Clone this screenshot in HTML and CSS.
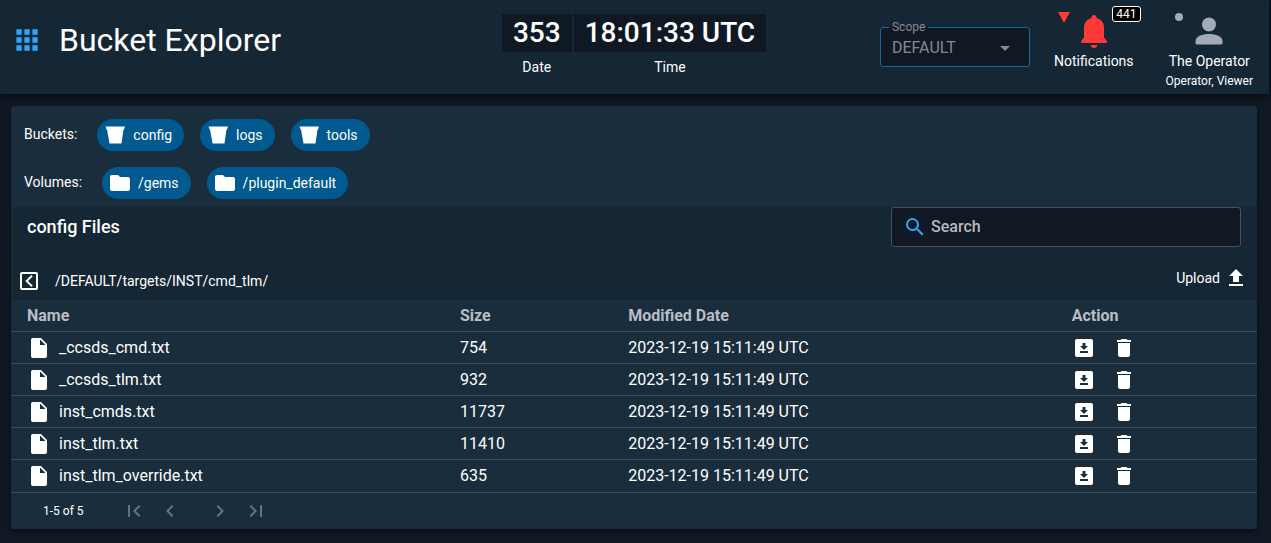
FILE: index.html
```html
<!DOCTYPE html>
<html lang="en">
<head>
<meta charset="utf-8">
<title>Bucket Explorer</title>
<link rel="stylesheet" href="styles.css">
</head>
<body>
<svg class="sprite" aria-hidden="true">
  <symbol id="bucket" viewBox="0 0 24 24"><path d="M2.500 3.500H22L21 6.500H20.500L18.500 20.500H6.500L4 6.500H3.500Z"/></symbol>
  <symbol id="folder" viewBox="0 0 24 24"><path d="M10,4H4C2.890,4 2,4.890 2,6V18A2,2 0 0,0 4,20H20A2,2 0 0,0 22,18V8C22,6.890 21.100,6 20,6H12L10,4Z"/></symbol>
  <symbol id="file" viewBox="0 0 24 24"><path d="M13,9V3.500L18.500,9M6,2C4.890,2 4,2.890 4,4V20A2,2 0 0,0 6,22H18A2,2 0 0,0 20,20V8L14,2H6Z"/></symbol>
  <symbol id="download" viewBox="0 0 24 24"><path d="M5,3H19A2,2 0 0,1 21,5V19A2,2 0 0,1 19,21H5A2,2 0 0,1 3,19V5A2,2 0 0,1 5,3M8,17H16V15H8V17M16,10H13.500V7H10.500V10H8L12,14L16,10Z"/></symbol>
  <symbol id="delete" viewBox="0 0 24 24"><path d="M19,4H15.500L14.500,3H9.500L8.500,4H5V6H19M6,19A2,2 0 0,0 8,21H16A2,2 0 0,0 18,19V7H6V19Z"/></symbol>
</svg>

<header class="app-bar">
  <div class="brand">
    <button class="icon-button apps" aria-label="Menu"><svg class="icon-large" viewBox="0 0 24 24"><path d="M16,20H20V16H16M16,14H20V10H16M10,8H14V4H10M16,8H20V4H16M10,14H14V10H10M4,14H8V10H4M4,20H8V16H4M10,20H14V16H10M4,8H8V4H4V8Z"/></svg></button>
    <h1 class="app-title">Bucket Explorer</h1>
  </div>
  <div class="clock">
    <div class="clock-part"><div class="clock-value">353</div><div class="clock-label">Date</div></div>
    <div class="clock-part"><div class="clock-value">18:01:33 UTC</div><div class="clock-label">Time</div></div>
  </div>
  <div class="tools">
    <fieldset class="scope">
      <legend class="scope-legend"><label for="scope">Scope</label></legend>
      <div class="scope-field">
        <select class="scope-select" id="scope"><option>DEFAULT</option></select>
        <svg class="scope-arrow" viewBox="0 0 24 24"><path d="M7,10L12,15L17,10H7Z"/></svg>
      </div>
    </fieldset>
    <button class="status notifications">
      <svg class="status-mark critical" viewBox="0 0 12 12"><path d="M0 1H12L6 12Z"/></svg>
      <svg class="bell" viewBox="0 0 26 33"><path d="M13 0C14.500 0 15.500 1 15.700 3C20.500 4.500 23 8 23 13V22C23 23.500 26 25 26 27Q26 28 25 28H1Q0 28 0 27C0 25 3 23.500 3 22V13C3 8 5.500 4.500 10.300 3C10.500 1 11.500 0 13 0ZM9.500 30H16.500C16 32 14.700 33 13 33S10 32 9.500 30Z"/></svg>
      <span class="badge">441</span>
      <span class="status-label">Notifications</span>
    </button>
    <button class="status user">
      <svg class="status-mark off" viewBox="0 0 12 12"><circle cx="5" cy="6" r="4"/></svg>
      <svg class="person" viewBox="0 0 28 28"><circle cx="14" cy="7.500" r="7"/><path d="M14 17C21 17 27.500 19.500 27.500 24V26Q27.500 27.500 26 27.500H2Q.5 27.500 .5 26V24C.5 19.500 7 17 14 17Z"/></svg>
      <span class="status-label">The Operator</span>
      <span class="status-sub">Operator, Viewer</span>
    </button>
  </div>
</header>

<main class="card">
  <section class="sources">
    <div class="source-row"><span class="source-label">Buckets:</span>
      <div class="chips">
        <button class="chip"><svg class="icon"><use href="#bucket"/></svg>config</button>
        <button class="chip"><svg class="icon"><use href="#bucket"/></svg>logs</button>
        <button class="chip"><svg class="icon"><use href="#bucket"/></svg>tools</button>
      </div>
    </div>
    <div class="source-row"><span class="source-label">Volumes:</span>
      <div class="chips">
        <button class="chip"><svg class="icon"><use href="#folder"/></svg>/gems</button>
        <button class="chip"><svg class="icon"><use href="#folder"/></svg>/plugin_default</button>
      </div>
    </div>
  </section>

  <section class="toolbar">
    <div class="toolbar-top">
      <h2 class="files-title">config Files</h2>
      <div class="search">
        <svg class="icon search-icon" viewBox="0 0 24 24"><path d="M9.500,3A6.500,6.500 0 0,1 16,9.500C16,11.110 15.410,12.590 14.440,13.730L14.710,14H15.500L20.500,19L19,20.500L14,15.500V14.710L13.730,14.440C12.590,15.410 11.110,16 9.500,16A6.500,6.500 0 0,1 3,9.500A6.500,6.500 0 0,1 9.500,3M9.500,5C7,5 5,7 5,9.500C5,12 7,14 9.500,14C12,14 14,12 14,9.500C14,7 12,5 9.500,5Z"/></svg>
        <input class="search-input" type="text" placeholder="Search" aria-label="Search">
      </div>
    </div>
    <div class="path-row">
      <div class="path">
        <button class="icon-button" aria-label="Back"><svg class="icon" viewBox="0 0 24 24"><path d="M19,3A2,2 0 0,1 21,5V19A2,2 0 0,1 19,21H5A2,2 0 0,1 3,19V5A2,2 0 0,1 5,3H19M19,19V5H5V19H19M15.710,7.410L11.120,12L15.710,16.590L14.290,18L8.290,12L14.290,6L15.710,7.410Z"/></svg></button>
        <span>/DEFAULT/targets/INST/cmd_tlm/</span>
      </div>
      <button class="icon-button upload">Upload<svg class="icon" viewBox="0 0 24 24"><path d="M9,16V10H5L12,3L19,10H15V16H9M5,20V18H19V20H5Z"/></svg></button>
    </div>
  </section>

  <table class="files">
    <thead><tr><th class="col-name">Name</th><th class="col-size">Size</th><th class="col-date">Modified Date</th><th>Action</th></tr></thead>
    <tbody>
      <tr><td><div class="file-name"><svg class="icon"><use href="#file"/></svg><span>_ccsds_cmd.txt</span></div></td><td>754</td><td>2023-12-19 15:11:49 UTC</td><td><div class="actions"><button class="icon-button" aria-label="Download"><svg class="icon"><use href="#download"/></svg></button><button class="icon-button" aria-label="Delete"><svg class="icon"><use href="#delete"/></svg></button></div></td></tr>
      <tr><td><div class="file-name"><svg class="icon"><use href="#file"/></svg><span>_ccsds_tlm.txt</span></div></td><td>932</td><td>2023-12-19 15:11:49 UTC</td><td><div class="actions"><button class="icon-button" aria-label="Download"><svg class="icon"><use href="#download"/></svg></button><button class="icon-button" aria-label="Delete"><svg class="icon"><use href="#delete"/></svg></button></div></td></tr>
      <tr><td><div class="file-name"><svg class="icon"><use href="#file"/></svg><span>inst_cmds.txt</span></div></td><td>11737</td><td>2023-12-19 15:11:49 UTC</td><td><div class="actions"><button class="icon-button" aria-label="Download"><svg class="icon"><use href="#download"/></svg></button><button class="icon-button" aria-label="Delete"><svg class="icon"><use href="#delete"/></svg></button></div></td></tr>
      <tr><td><div class="file-name"><svg class="icon"><use href="#file"/></svg><span>inst_tlm.txt</span></div></td><td>11410</td><td>2023-12-19 15:11:49 UTC</td><td><div class="actions"><button class="icon-button" aria-label="Download"><svg class="icon"><use href="#download"/></svg></button><button class="icon-button" aria-label="Delete"><svg class="icon"><use href="#delete"/></svg></button></div></td></tr>
      <tr><td><div class="file-name"><svg class="icon"><use href="#file"/></svg><span>inst_tlm_override.txt</span></div></td><td>635</td><td>2023-12-19 15:11:49 UTC</td><td><div class="actions"><button class="icon-button" aria-label="Download"><svg class="icon"><use href="#download"/></svg></button><button class="icon-button" aria-label="Delete"><svg class="icon"><use href="#delete"/></svg></button></div></td></tr>
    </tbody>
  </table>

  <footer class="pager">
    <span class="pager-count">1-5 of 5</span>
    <div class="pager-group">
      <button class="icon-button" disabled aria-label="First page"><svg class="icon" viewBox="0 0 24 24"><path d="M18.410,16.590L13.820,12L18.410,7.410L17,6L11,12L17,18L18.410,16.590M6,6H8V18H6V6Z"/></svg></button>
      <button class="icon-button" disabled aria-label="Previous page"><svg class="icon" viewBox="0 0 24 24"><path d="M15.410,16.580L10.830,12L15.410,7.410L14,6L8,12L14,18L15.410,16.580Z"/></svg></button>
    </div>
    <div class="pager-group">
      <button class="icon-button" disabled aria-label="Next page"><svg class="icon" viewBox="0 0 24 24"><path d="M8.590,16.580L13.170,12L8.590,7.410L10,6L16,12L10,18L8.590,16.580Z"/></svg></button>
      <button class="icon-button" disabled aria-label="Last page"><svg class="icon" viewBox="0 0 24 24"><path d="M5.590,7.410L10.180,12L5.590,16.590L7,18L13,12L7,6L5.590,7.410M16,6H18V18H16V6Z"/></svg></button>
    </div>
  </footer>
</main>
</body>
</html>
```
FILE: styles.css
```css
* { box-sizing: border-box; }
body {
  margin: 0;
  background: #101923;
  color: #fff;
  font: 14px/20px Roboto, sans-serif;
}
button, input, select { font: inherit; color: inherit; margin: 0; }
h1, h2 { margin: 0; }
svg { display: block; fill: currentColor; flex: none; }
.sprite { position: absolute; width: 0; height: 0; }
.icon { width: 24px; height: 24px; }
.icon-large { width: 32px; height: 32px; }
.icon-button {
  display: flex;
  align-items: center;
  padding: 0;
  border: 0;
  background: none;
}

.app-bar {
  display: grid;
  grid-template-columns: 1fr auto 1fr;
  margin-right: 2px;
  padding: 14px 12px 3px 11px;
  background: #152635;
  box-shadow: 0 2px 6px #060b12;
}
.brand { display: flex; align-items: center; gap: 16px; height: 52px; }
.apps { color: #2fa5f8; }
.app-title { font-size: 32px; line-height: 40px; font-weight: 400; }
.clock { display: flex; gap: 2px; text-align: center; }
.clock-value {
  padding: 0 11px;
  background: #101923;
  font-size: 28px;
  line-height: 38px;
  font-weight: 500;
}
.clock-label { margin-top: 5px; }
.tools { display: flex; justify-content: flex-end; align-items: flex-start; padding-right: 4px; }

.scope {
  width: 150px;
  min-width: 0;
  margin: 6px 24px 0 0;
  padding: 0;
  border: 1px solid #1d659c;
  border-radius: 3px;
  background: #101923;
  color: #858b92;
}
.scope-legend { margin-left: 8px; padding: 0 3px; font-size: 12px; line-height: 14px; }
.scope-field { display: grid; align-items: center; height: 32px; }
.scope-select {
  grid-area: 1 / 1;
  height: 28px;
  margin-bottom: 6px;
  padding: 0 32px 0 11px;
  border: 0;
  background: transparent;
  appearance: none;
  font-size: 16px;
}
.scope-arrow { grid-area: 1 / 1; justify-self: end; width: 24px; height: 24px; margin: 0 12px 6px 0; pointer-events: none; }

.status {
  position: relative;
  display: flex;
  flex-direction: column;
  align-items: center;
  padding: 0;
  border: 0;
  background: none;
}
.notifications { margin-right: 32px; }
.bell { width: 26px; height: 33px; margin-top: 1px; color: #ff3838; }
.person { width: 28px; height: 28px; margin: 3px 0; color: #a4abb6; }
.status-label { margin-top: 3px; line-height: 20px; }
.status-sub { font-size: 12px; line-height: 20px; }
.status-mark { position: absolute; top: -3px; width: 12px; height: 12px; }
.critical { left: 4px; color: #ff3838; }
.off { left: 8px; color: #a4abb6; }
.badge {
  position: absolute;
  top: -8px;
  right: -7px;
  padding: 0 3px;
  border: 1px solid #fff;
  border-radius: 3px;
  background: #000;
  font-size: 12px;
  line-height: 14px;
}

.card {
  margin: 12px 14px 14px 11px;
  border-radius: 4px;
  background: #192d3d;
  box-shadow: 0 2px 4px #080e15;
  overflow: hidden;
}
.sources { display: grid; gap: 16px; padding: 13px 13px 8px; }
.source-row { display: flex; gap: 20px; }
.source-label { padding-top: 5px; }
.chips { display: flex; gap: 16px; }
.chip {
  display: flex;
  align-items: center;
  gap: 6px;
  height: 32px;
  padding: 0 12px 0 6px;
  border: 0;
  border-radius: 16px;
  background: #005a8f;
}

.toolbar { padding-bottom: 7px; background: #152635; }
.toolbar-top { display: flex; justify-content: space-between; padding: 0 16px; }
.files-title { font-size: 18px; line-height: 40px; font-weight: 500; }
.search {
  display: flex;
  align-items: center;
  width: 350px;
  height: 40px;
  padding: 0 11px;
  gap: 4px;
  border: 1px solid #4a5057;
  border-radius: 3px;
  background: #101923;
}
.search-icon { color: #2fa5f8; }
.search-input {
  flex: 1;
  min-width: 0;
  padding: 0;
  border: 0;
  outline: 0;
  background: transparent;
  font-size: 16px;
  font-weight: 500;
}
.search-input::placeholder { color: #b7babd; opacity: 1; }
.path-row {
  display: flex;
  justify-content: space-between;
  align-items: flex-start;
  padding: 19px 9px 0 6px;
}
.path { display: flex; align-items: center; gap: 14px; padding-top: 3px; }
.upload { gap: 4px; }

.files { width: 100%; border-collapse: separate; border-spacing: 0; table-layout: fixed; font-size: 16px; }
.files th, .files td { height: 32px; padding: 0 16px; border-bottom: 1px solid #364a58; text-align: left; }
.files th { color: #b9bec5; font-weight: 700; }
.files tbody tr:last-child td { height: 33px; }
.col-name { width: 34.75%; }
.col-size { width: 13.5%; }
.col-date { width: 35.6%; }
.file-name { display: flex; align-items: center; gap: 8px; }
.actions { display: flex; gap: 16px; }

.pager { display: flex; align-items: center; gap: 26px; height: 36px; padding-left: 32px; }
.pager-count { margin-right: 12px; font-size: 12px; }
.pager-group { display: flex; gap: 12px; color: #647380; }
```
